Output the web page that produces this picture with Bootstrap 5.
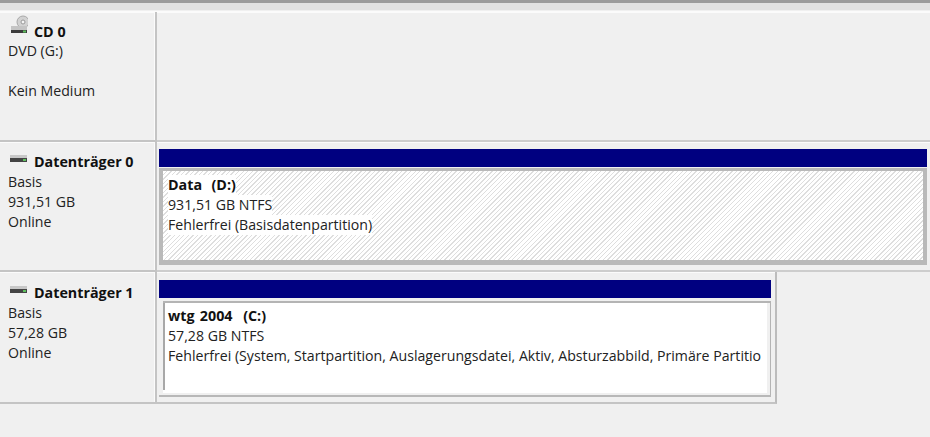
<!DOCTYPE html>
<html>
<head>
	<meta charset="UTF-8">
	<title>Datenträgerverwaltung</title>
	<link rel="stylesheet" href="https://cdn.jsdelivr.net/npm/bootstrap@5.3.3/dist/css/bootstrap.min.css">
	<style>
		html, body { height: 100%; }
		body { background: #f0f0f0; color: #222; font-family: "Open Sans", "Noto Sans", sans-serif; font-size: 14.15px; line-height: 20px; overflow: hidden; }
		.top-edge { height: 12px; border-top: 3px solid #9c9c9c; background: linear-gradient(#e2e2e2 0 7px, #f0f0f0 7px 8px, #fbfbfb 8px); }
		.disk-row { height: 130px; }
		.disk-row.last { height: 132px; }
		.disk-label { width: 157px; flex: none; padding: 10px 0 0 8px; border-right: 2px solid #c4c4c4; border-bottom: 2px solid #c4c4c4; box-shadow: inset 0 1px #fbfbfb, inset -1px 0 #fbfbfb; }
		.disk-label.first { padding-top: 6px; }
		.disk-label.lower { padding-top: 11px; }
		.disk-name { height: 20px; font-weight: 700; font-size: 14.3px; color: #111; white-space: nowrap; }
		.disk-label.first .disk-name { height: 23px; }
		.disk-icon { margin: -1px 6px 1px 0; vertical-align: 0; }
		.disk-icon.cd { margin: -3px 6px 3px 0; }
		.disk-area { flex: 1; padding: 7px 3px 0 2px; border-bottom: 2px solid #cdcdcd; box-shadow: inset 0 1px #fbfbfb; }
		.disk-area.empty { padding: 0; }
		.disk-area.short { flex: none; width: 620px; padding: 8px 4px 0 2px; border-right: 2px solid #bcbcbc; border-bottom: 2px solid #c4c4c4; }
		.part-bar { height: 18px; background: #000080; }
		.part-box { height: 97px; margin-top: 1px; padding: 4px 5px; border-style: solid; border-color: #b9b9b9; border-width: 3px 4px 5px 4px; background: repeating-linear-gradient(135deg, #fff 0 2.2px, #dedede 2.2px 3.2px); }
		.part-wrap { height: 96px; margin-top: 3px; padding-left: 4px; border-bottom: 2px solid #b8b8b8; }
		.part-box.plain { height: 94px; margin: 0; padding: 3px 0 0 5px; border-width: 2px 1px 0 0; border-color: #b4b4b4; background: linear-gradient(#a8a8a8, #a8a8a8) left top / 2px 87px no-repeat, #fff; box-shadow: inset -3px -2px 0 #f0f0f0; white-space: nowrap; overflow: hidden; }
		.part-text { display: table; background: #fff; }
		.part-title { font-weight: 700; font-size: 14.3px; color: #111; word-spacing: 1px; }
		.part-title.wide { word-spacing: 1.6px; }
	</style>
</head>
<body>
	<div class="top-edge"></div>

	<!-- CD -->
	<div class="d-flex disk-row">
		<div class="disk-label first">
			<div class="disk-name">
				<svg class="disk-icon cd" width="20" height="19" viewBox="0 0 20 19">
					<circle cx="15" cy="7" r="6" fill="#d2d2d2" stroke="#a8a8a8"/>
					<circle cx="15" cy="7" r="2" fill="#f4f4f4" stroke="#999"/>
					<rect x="3" y="11" width="16" height="4" fill="#c4c4c4"/>
					<rect x="3" y="15" width="16" height="3" fill="#3c3c3c"/>
					<rect x="15" y="15.5" width="3" height="2" fill="#5cc05c"/>
				</svg>CD 0
			</div>
			<div>DVD (G:)</div>
			<div>&nbsp;</div>
			<div>Kein Medium</div>
		</div>
		<div class="disk-area empty"></div>
	</div>

	<!-- Datentraeger 0 -->
	<div class="d-flex disk-row">
		<div class="disk-label">
			<div class="disk-name">
				<svg class="disk-icon" width="20" height="12" viewBox="0 0 20 12">
					<rect x="2" y="1" width="17" height="3" fill="#c8c8c8"/>
					<rect x="2" y="4" width="17" height="4" fill="#444"/>
					<rect x="15" y="5" width="3" height="2" fill="#5cc05c"/>
				</svg>Datenträger 0
			</div>
			<div>Basis</div>
			<div>931,51 GB</div>
			<div>Online</div>
		</div>
		<div class="disk-area">
			<div class="part-bar"></div>
			<div class="part-box">
				<div class="part-text part-title">Data&nbsp; (D:)</div>
				<div class="part-text">931,51 GB NTFS</div>
				<div class="part-text">Fehlerfrei (Basisdatenpartition)</div>
			</div>
		</div>
	</div>

	<!-- Datentraeger 1 -->
	<div class="d-flex disk-row last">
		<div class="disk-label lower">
			<div class="disk-name">
				<svg class="disk-icon" width="20" height="12" viewBox="0 0 20 12">
					<rect x="2" y="1" width="17" height="3" fill="#c8c8c8"/>
					<rect x="2" y="4" width="17" height="4" fill="#444"/>
					<rect x="15" y="5" width="3" height="2" fill="#5cc05c"/>
				</svg>Datenträger 1
			</div>
			<div>Basis</div>
			<div>57,28 GB</div>
			<div>Online</div>
		</div>
		<div class="disk-area short">
			<div class="part-bar"></div>
			<div class="part-wrap">
				<div class="part-box plain">
					<div class="part-title wide">wtg 2004&nbsp; (C:)</div>
					<div>57,28 GB NTFS</div>
					<div>Fehlerfrei (System, Startpartition, Auslagerungsdatei, Aktiv, Absturzabbild, Primäre Partitio</div>
				</div>
			</div>
		</div>
	</div>
</body>
</html>
